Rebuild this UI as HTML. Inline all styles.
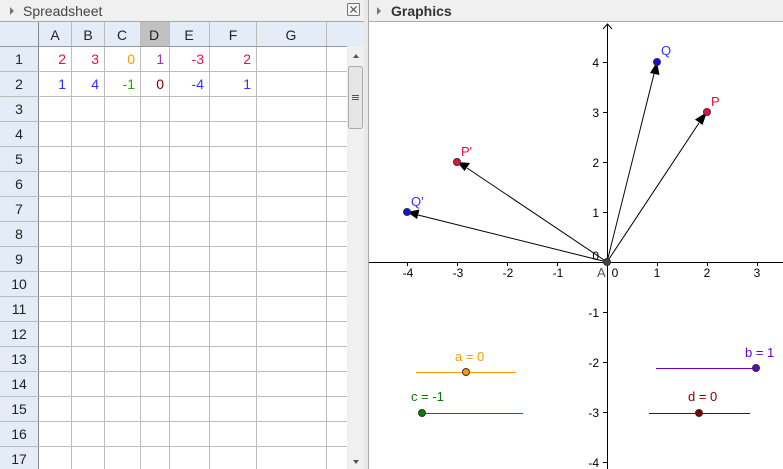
<!DOCTYPE html>
<html><head><style>
body{margin:0;width:783px;height:469px;overflow:hidden;background:#fff;font-family:"Liberation Sans",sans-serif}
svg{display:block}
</style></head><body>
<svg width="783" height="469" xmlns="http://www.w3.org/2000/svg" font-family="Liberation Sans, sans-serif">
<!-- spreadsheet header -->
<rect x="0" y="0" width="366" height="22" fill="#f0f0f0"/>
<line x1="0" y1="21.5" x2="366" y2="21.5" stroke="#aaa"/>
<path d="M10 7 L14 11 L10 15Z" fill="#777"/>
<text x="23" y="16" font-size="14" fill="#444">Spreadsheet</text>
<rect x="347.5" y="3.5" width="12" height="12" fill="#f4f4f4" stroke="#777" rx="1"/>
<path d="M350.5 6.5 L356.5 12.5 M356.5 6.5 L350.5 12.5" stroke="#444" stroke-width="1"/>
<!-- column header -->
<rect x="0" y="22" width="364" height="24" fill="#e4ecf7"/>
<rect x="140" y="22" width="29" height="24" fill="#c0c0c0"/>
<rect x="0" y="46" width="38" height="423" fill="#e4ecf7"/>
<g stroke="#bdbdbd" stroke-width="1">
<line x1="38.5" y1="22" x2="38.5" y2="469" stroke="#888"/>
<line x1="71.5" y1="22" x2="71.5" y2="469"/>
<line x1="104.5" y1="22" x2="104.5" y2="469"/>
<line x1="140.5" y1="22" x2="140.5" y2="469"/>
<line x1="169.5" y1="22" x2="169.5" y2="469"/>
<line x1="209.5" y1="22" x2="209.5" y2="469"/>
<line x1="256.5" y1="22" x2="256.5" y2="469"/>
<line x1="326.5" y1="22" x2="326.5" y2="469"/>
<line x1="0" y1="46.5" x2="347" y2="46.5" stroke="#999"/>
<line x1="0" y1="71.5" x2="347" y2="71.5"/><line x1="0" y1="96.5" x2="347" y2="96.5"/><line x1="0" y1="121.5" x2="347" y2="121.5"/><line x1="0" y1="146.5" x2="347" y2="146.5"/><line x1="0" y1="171.5" x2="347" y2="171.5"/><line x1="0" y1="196.5" x2="347" y2="196.5"/><line x1="0" y1="221.5" x2="347" y2="221.5"/><line x1="0" y1="246.5" x2="347" y2="246.5"/><line x1="0" y1="271.5" x2="347" y2="271.5"/><line x1="0" y1="296.5" x2="347" y2="296.5"/><line x1="0" y1="321.5" x2="347" y2="321.5"/><line x1="0" y1="346.5" x2="347" y2="346.5"/><line x1="0" y1="371.5" x2="347" y2="371.5"/><line x1="0" y1="396.5" x2="347" y2="396.5"/><line x1="0" y1="421.5" x2="347" y2="421.5"/><line x1="0" y1="446.5" x2="347" y2="446.5"/>
</g>
<g font-size="14" fill="#222" text-anchor="middle">
<text x="55" y="40">A</text><text x="88" y="40">B</text><text x="122" y="40">C</text><text x="154" y="40">D</text><text x="189" y="40">E</text><text x="233" y="40">F</text><text x="291" y="40">G</text>
<text x="19" y="64">1</text><text x="19" y="89">2</text><text x="19" y="114">3</text><text x="19" y="139">4</text><text x="19" y="164">5</text><text x="19" y="189">6</text><text x="19" y="214">7</text><text x="19" y="239">8</text><text x="19" y="264">9</text><text x="19" y="289">10</text><text x="19" y="314">11</text><text x="19" y="339">12</text><text x="19" y="364">13</text><text x="19" y="389">14</text><text x="19" y="414">15</text><text x="19" y="439">16</text><text x="19" y="464">17</text>
</g>
<g font-size="14" text-anchor="end">
<text x="66" y="64" fill="#e8103c">2</text><text x="99" y="64" fill="#e8103c">3</text><text x="135" y="64" fill="#ff9900">0</text><text x="164" y="64" fill="#9933cc">1</text><text x="204" y="64" fill="#e8103c">-3</text><text x="251" y="64" fill="#e8103c">2</text>
<text x="66" y="89" fill="#3030ff">1</text><text x="99" y="89" fill="#3030ff">4</text><text x="135" y="89" fill="#22aa00">-1</text><text x="164" y="89" fill="#800000">0</text><text x="204" y="89" fill="#3030ff">-4</text><text x="251" y="89" fill="#3030ff">1</text>
</g>
<!-- scrollbar -->
<rect x="347" y="46" width="17" height="423" fill="#f0f0f0"/>
<path d="M353 58 L359 58 L356 54Z" fill="#555"/>
<rect x="348.5" y="66.5" width="14" height="62" fill="#e6e6e6" stroke="#aaa" rx="2"/>
<path d="M352 95.5h7M352 97.5h7M352 99.5h7" stroke="#555"/>
<path d="M353 460 L359 460 L356 464Z" fill="#555"/>
<rect x="364" y="0" width="5" height="469" fill="#e8e8e8"/>
<line x1="368.5" y1="0" x2="368.5" y2="469" stroke="#aaa"/>
<!-- graphics header -->
<rect x="369" y="0" width="414" height="22" fill="#f0f0f0"/>
<line x1="369" y1="21.5" x2="783" y2="21.5" stroke="#aaa"/>
<path d="M377 7 L381 11 L377 15Z" fill="#777"/>
<text x="391" y="16" font-size="14" font-weight="bold" fill="#333">Graphics</text>
<!-- axes -->
<g stroke="#000" stroke-width="1">
<line x1="369" y1="262.5" x2="783" y2="262.5"/>
<line x1="607.5" y1="24" x2="607.5" y2="469"/>
<path d="M603 29 L607.5 24 L612 29" fill="none"/>
<path d="M407.5 262v4M457.5 262v4M507.5 262v4M557.5 262v4M657.5 262v4M707.5 262v4M757.5 262v4"/>
<path d="M603 62.5h4M603 112.5h4M603 162.5h4M603 212.5h4M603 312.5h4M603 362.5h4M603 412.5h4M603 462.5h4"/>
</g>
<g font-size="12" fill="#000" text-anchor="middle">
<text x="408" y="277">-4</text><text x="458" y="277">-3</text><text x="508" y="277">-2</text><text x="558" y="277">-1</text><text x="615" y="277">0</text><text x="657" y="277">1</text><text x="707" y="277">2</text><text x="757" y="277">3</text>
</g>
<g font-size="12" fill="#000" text-anchor="end">
<text x="599" y="67">4</text><text x="599" y="117">3</text><text x="599" y="167">2</text><text x="599" y="217">1</text><text x="599" y="260">0</text><text x="599" y="317">-1</text><text x="599" y="367">-2</text><text x="599" y="417">-3</text><text x="599" y="467">-4</text>
</g>
<text x="597" y="277" font-size="13" fill="#555">A</text>
<!-- vectors -->
<g stroke="#000" stroke-width="1">
<line x1="607" y1="262" x2="654" y2="74"/>
<line x1="607" y1="262" x2="699" y2="123"/>
<line x1="607" y1="262" x2="467" y2="168"/>
<line x1="607" y1="262" x2="418" y2="215"/>
</g>
<g fill="#000">
<path d="M657 62 L659.5 75 L650 73Z"/>
<path d="M707 112 L702.5 125 L695 119.5Z"/>
<path d="M457 162 L470 163 L464.5 171Z"/>
<path d="M407 212 L419.5 209.5 L417 219Z"/>
</g>
<g stroke="#333" stroke-width="1">
<circle cx="657" cy="62" r="3.5" fill="#1010e0"/>
<circle cx="707" cy="112" r="3.5" fill="#e8103c"/>
<circle cx="457" cy="162" r="3.5" fill="#e8103c"/>
<circle cx="407" cy="212" r="3.5" fill="#1010e0"/>
<circle cx="607" cy="262" r="3.5" fill="#444"/>
</g>
<g font-size="13">
<text x="661" y="55" fill="#3030ff">Q</text>
<text x="711" y="106" fill="#e8103c">P</text>
<text x="461" y="156" fill="#e8103c">P'</text>
<text x="411" y="206" fill="#3030ff">Q'</text>
</g>
<!-- sliders -->
<line x1="416" y1="372.5" x2="516" y2="372.5" stroke="#ff9900"/>
<circle cx="466" cy="372" r="3.5" fill="#ff9900" stroke="#333"/>
<text x="455" y="361" font-size="13" fill="#ff9900">a = 0</text>
<line x1="422" y1="413.5" x2="523" y2="413.5" stroke="#008000"/>
<circle cx="422" cy="413" r="3.5" fill="#008000" stroke="#333"/>
<text x="411" y="401" font-size="13" fill="#008000">c = -1</text>
<line x1="656" y1="368.5" x2="756" y2="368.5" stroke="#6600cc"/>
<circle cx="756" cy="368" r="3.5" fill="#6600cc" stroke="#333"/>
<text x="745" y="357" font-size="13" fill="#6600cc">b = 1</text>
<line x1="649" y1="413.5" x2="750" y2="413.5" stroke="#800000"/>
<circle cx="699" cy="413" r="3.5" fill="#800000" stroke="#333"/>
<text x="688" y="401" font-size="13" fill="#800000">d = 0</text>
</svg>
</body></html>
